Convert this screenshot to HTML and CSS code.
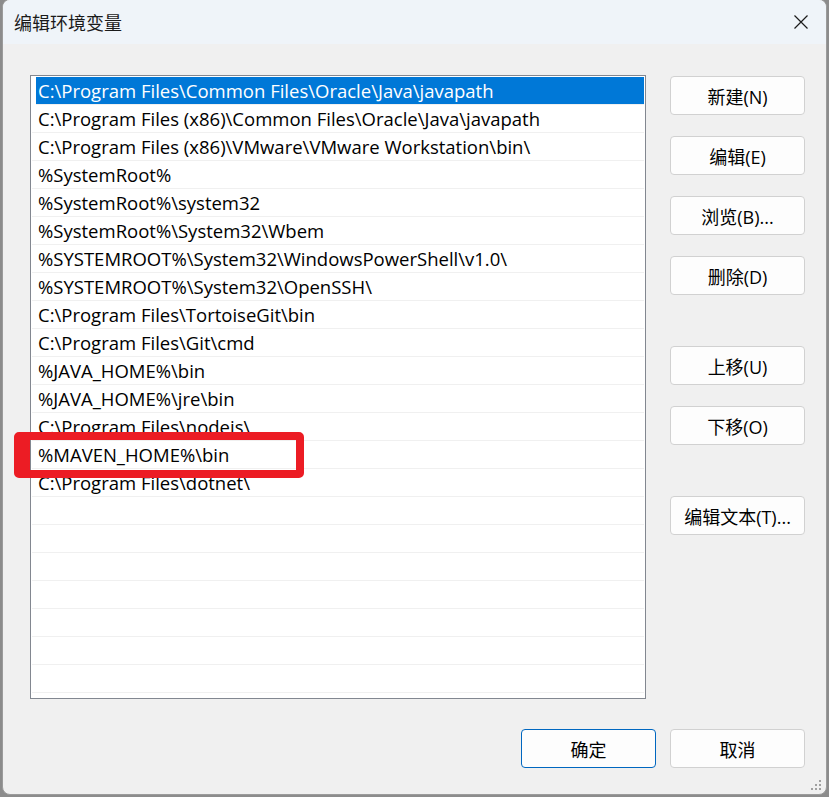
FILE: index.html
```html
<!DOCTYPE html>
<html lang="zh-CN">
<head>
    <meta charset="UTF-8">
    <meta name="viewport" content="width=device-width, initial-scale=1.0">
    <title>编辑环境变量</title>
    <link rel="stylesheet" href="styles.css">
</head>
<body>
    <div class="dialog">
        <div class="titlebar">
            <span class="title">编辑环境变量</span>
            <button class="close-btn" aria-label="关闭">
                <svg width="16" height="16" viewBox="0 0 16 16">
                    <path d="M1.5 1.5 L14.5 14.5 M14.5 1.5 L1.5 14.5" stroke="#1b1b1b" stroke-width="1.2" fill="none"/>
                </svg>
            </button>
        </div>

        <div class="content">
            <div class="main-row">
                <div class="path-list">
                    <div class="row selected">C:\Program Files\Common Files\Oracle\Java\javapath</div>
                    <div class="row">C:\Program Files (x86)\Common Files\Oracle\Java\javapath</div>
                    <div class="row">C:\Program Files (x86)\VMware\VMware Workstation\bin\</div>
                    <div class="row">%SystemRoot%</div>
                    <div class="row">%SystemRoot%\system32</div>
                    <div class="row">%SystemRoot%\System32\Wbem</div>
                    <div class="row">%SYSTEMROOT%\System32\WindowsPowerShell\v1.0\</div>
                    <div class="row">%SYSTEMROOT%\System32\OpenSSH\</div>
                    <div class="row">C:\Program Files\TortoiseGit\bin</div>
                    <div class="row">C:\Program Files\Git\cmd</div>
                    <div class="row">%JAVA_HOME%\bin</div>
                    <div class="row">%JAVA_HOME%\jre\bin</div>
                    <div class="row">C:\Program Files\nodejs\</div>
                    <div class="row">%MAVEN_HOME%\bin</div>
                    <div class="row">C:\Program Files\dotnet\</div>
                    <div class="row"></div>
                    <div class="row"></div>
                    <div class="row"></div>
                    <div class="row"></div>
                    <div class="row"></div>
                    <div class="row"></div>
                    <div class="row"></div>
                    <div class="row"></div>
                </div>

                <div class="side-buttons">
                    <button class="btn">新建(N)</button>
                    <button class="btn">编辑(E)</button>
                    <button class="btn">浏览(B)...</button>
                    <button class="btn">删除(D)</button>
                    <button class="btn group-start">上移(U)</button>
                    <button class="btn">下移(O)</button>
                    <button class="btn group-start">编辑文本(T)...</button>
                </div>
            </div>

            <div class="footer">
                <button class="btn default">确定</button>
                <button class="btn">取消</button>
            </div>
        </div>

        <!-- highlight around the maven entry -->
        <div class="mark"></div>

        <svg class="grip" width="10" height="10" viewBox="0 0 10 10">
            <rect x="8" y="0" width="2" height="2" fill="#a0a0a0"/>
            <rect x="4" y="4" width="2" height="2" fill="#a0a0a0"/>
            <rect x="8" y="4" width="2" height="2" fill="#a0a0a0"/>
            <rect x="0" y="8" width="2" height="2" fill="#a0a0a0"/>
            <rect x="4" y="8" width="2" height="2" fill="#a0a0a0"/>
            <rect x="8" y="8" width="2" height="2" fill="#a0a0a0"/>
        </svg>
    </div>
</body>
</html>
```

FILE: styles.css
```css
html, body {
    margin: 0;
    padding: 0;
    height: 100%;
}
body {
    background: #8c8c8c;
    font-family: "Open Sans", "Noto Sans CJK SC", sans-serif;
    color: #000;
    overflow: hidden;
}
.dialog {
    position: relative;
    box-sizing: border-box;
    width: 825px;
    height: 796px;
    margin-left: 2px;
    margin-top: -1px;
    background: #f0f0f0;
    border: 1px solid #9b9b9b;
    border-radius: 8px;
    overflow: hidden;
}
.titlebar {
    height: 44px;
    background: #eff4f9;
    display: flex;
    align-items: center;
    justify-content: space-between;
    padding-left: 11px;
}
.title {
    font-family: "Noto Sans CJK SC", sans-serif;
    font-size: 18px;
    color: #1a1a1a;
}
.close-btn {
    width: 46px;
    height: 44px;
    border: none;
    background: transparent;
    display: flex;
    align-items: center;
    justify-content: center;
    padding: 0;
    margin-right: 2px;
}
.content {
    padding: 31px 20px 0 27px;
}
.main-row {
    display: flex;
}
.path-list {
    box-sizing: border-box;
    width: 616px;
    height: 624px;
    background: #fff;
    border: 1px solid #828790;
    padding-top: 1px;
    overflow: hidden;
}
.row {
    height: 27px;
    line-height: 28px;
    border-bottom: 1px solid #f0f0f0;
    margin: 0 1px 0 1px;
    padding-left: 6px;
    font-size: 18.5px;
    white-space: nowrap;
}
.row.selected {
    background: #0078d7;
    color: #fff;
    margin-left: 5px;
    padding-left: 2px;
}
.side-buttons {
    display: flex;
    flex-direction: column;
    gap: 21px;
    margin-left: 24px;
    padding-top: 1px;
}
.btn {
    box-sizing: border-box;
    width: 135px;
    height: 39px;
    background: #fdfdfd;
    border: 1px solid #d1d1d1;
    border-radius: 4px;
    font-family: "Open Sans", "Noto Sans CJK SC", sans-serif;
    font-size: 18px;
    color: #000;
    padding: 0;
}
.btn.group-start {
    margin-top: 30px;
}
.btn.default {
    border-color: #0067c0;
}
.footer {
    display: flex;
    justify-content: flex-end;
    gap: 14px;
    margin-top: 30px;
    padding-right: 1px;
}
.mark {
    position: absolute;
    left: 11px;
    top: 432px;
    width: 266px;
    height: 30px;
    border: 8px solid #ec1c24;
    border-left-width: 16px;
    border-radius: 5px;
}
.grip {
    position: absolute;
    right: 5px;
    bottom: 4px;
}
```
